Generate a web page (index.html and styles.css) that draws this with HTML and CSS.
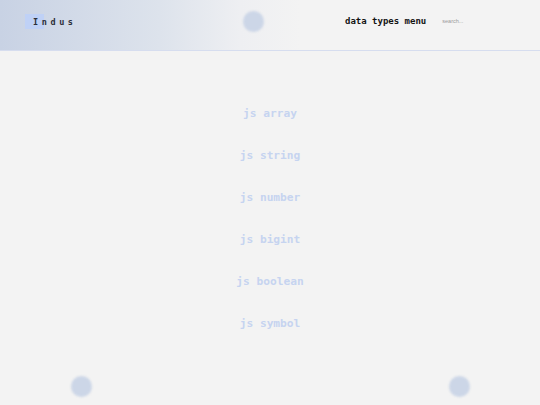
FILE: index.html
```html
<!DOCTYPE html>
<html>
<head>
<meta charset="utf-8">
<link rel="stylesheet" href="styles.css">
</head>
<body>
<header class="header">
  <div class="brand"><span class="brand-mark"></span><span class="brand-text">Indus</span></div>
  <div class="header-right">
    <h1 class="title">data types menu</h1>
    <input class="search" type="text" placeholder="search...">
  </div>
  <span class="blob blob-top"></span>
</header>
<main class="menu">
  <a class="item">js array</a>
  <a class="item">js string</a>
  <a class="item">js number</a>
  <a class="item">js bigint</a>
  <a class="item">js boolean</a>
  <a class="item">js symbol</a>
</main>
<span class="blob blob-left"></span>
<span class="blob blob-right"></span>
</body>
</html>
```
FILE: styles.css
```css
* { box-sizing: border-box; }
html, body { margin: 0; padding: 0; }
body {
  width: 540px;
  height: 405px;
  overflow: hidden;
  background: #f3f3f3;
  font-family: "DejaVu Sans Mono", monospace;
  position: relative;
}
.header {
  position: relative;
  height: 51px;
  display: flex;
  align-items: center;
  justify-content: space-between;
  padding: 0 0 0 25px;
  background: linear-gradient(90deg, #c8d2e4 0px, #dde3ec 160px, #eeeff2 240px, #f3f3f3 300px);
  border-bottom: 1px solid #d6ddef;
}
.brand {
  position: relative;
  display: flex;
  align-items: center;
  height: 15px;
  margin-top: -7px;
}
.brand-mark {
  position: absolute;
  left: 0;
  top: 0;
  width: 19px;
  height: 15px;
  background: #bfd1f6;
}
.brand-text {
  position: relative;
  margin-left: 8px;
  font-family: "DejaVu Sans Mono", monospace;
  font-size: 8.5px;
  font-weight: bold;
  letter-spacing: 3.6px;
  color: #2c2f3a;
}
.header-right {
  display: flex;
  align-items: center;
  gap: 16px;
  width: 195px;
  margin-top: -8px;
}
.title {
  margin: 0;
  font-size: 9px;
  font-weight: bold;
  color: #141414;
  white-space: nowrap;
}
.search {
  border: none;
  background: transparent;
  outline: none;
  padding: 0;
  width: 60px;
  font-family: "Liberation Sans", sans-serif;
  font-size: 5.5px;
  color: #888;
}
.search::placeholder { color: #9a9a9a; }
.menu {
  display: flex;
  flex-direction: column;
  align-items: center;
  gap: 27px;
  padding-top: 55px;
}
.item {
  font-size: 11.2px;
  font-weight: bold;
  line-height: 15px;
  color: #c6d4f0;
  text-decoration: none;
}
.blob {
  position: absolute;
  width: 21px;
  height: 21px;
  border-radius: 50%;
  background: #ccd6e7;
  filter: blur(1.2px);
}
.blob-top { left: 243px; top: 11px; }
.blob-left { left: 71px; top: 376px; }
.blob-right { left: 449px; top: 376px; }
```
